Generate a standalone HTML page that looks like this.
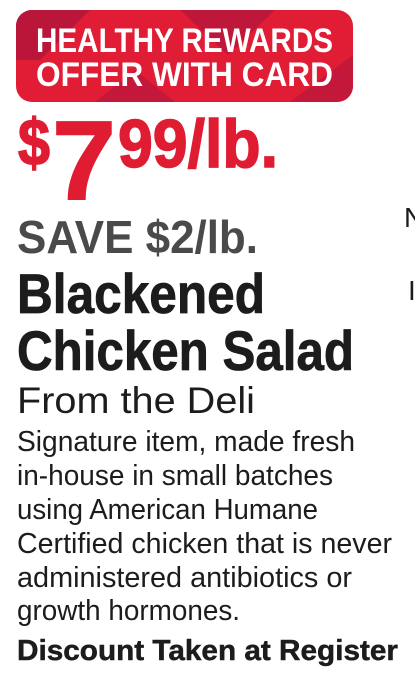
<!DOCTYPE html>
<html><head><meta charset="utf-8"><style>
html,body{margin:0;padding:0;background:#fff;width:415px;height:682px;overflow:hidden}
svg{display:block}
text{font-family:"Liberation Sans",sans-serif}
</style></head><body>
<svg width="415" height="682" viewBox="0 0 415 682" xmlns="http://www.w3.org/2000/svg">
<defs><clipPath id="c"><rect x="16" y="10" width="337" height="92" rx="16"/></clipPath></defs>
<g clip-path="url(#c)">
<rect x="16" y="10" width="337" height="92" fill="#e11c35"/>
<polygon points="16,10 90,10 40,60 16,60" fill="#b9163a"/>
<polygon points="180,10 275,10 228,55" fill="#bf173a"/>
<polygon points="95,102 135,70 175,102" fill="#c4183a"/>
<polygon points="290,102 353,55 353,102" fill="#c4183a"/>
</g>
<g fill="#fff" font-weight="bold" font-size="34">
<text x="36" y="52" textLength="297" lengthAdjust="spacingAndGlyphs">HEALTHY REWARDS</text>
<text x="36" y="86" textLength="297" lengthAdjust="spacingAndGlyphs">OFFER WITH CARD</text>
</g>
<g fill="#e01c33" stroke="#e01c33" stroke-width="1.5" font-weight="bold">
<text x="18" y="165" font-size="66" textLength="32" lengthAdjust="spacingAndGlyphs">$</text>
<text x="52" y="199" font-size="112" textLength="64" lengthAdjust="spacingAndGlyphs">7</text>
<text x="118" y="167" font-size="68" textLength="160" lengthAdjust="spacingAndGlyphs">99/lb.</text>
</g>
<text x="17" y="253" font-size="46" font-weight="bold" fill="#4a4a4a" textLength="241" lengthAdjust="spacingAndGlyphs">SAVE $2/lb.</text>
<g fill="#1c1c1c" stroke="#1c1c1c" stroke-width="0.8" font-weight="bold" font-size="56">
<text x="17" y="313" textLength="248" lengthAdjust="spacingAndGlyphs">Blackened</text>
<text x="17" y="370" textLength="337" lengthAdjust="spacingAndGlyphs">Chicken Salad</text>
</g>
<text x="17" y="413" font-size="37" fill="#1c1c1c" textLength="238" lengthAdjust="spacingAndGlyphs">From the Deli</text>
<g fill="#1c1c1c" font-size="29">
<text x="17" y="451" textLength="338" lengthAdjust="spacingAndGlyphs">Signature item, made fresh</text>
<text x="17" y="485" textLength="316" lengthAdjust="spacingAndGlyphs">in-house in small batches</text>
<text x="17" y="519" textLength="301" lengthAdjust="spacingAndGlyphs">using American Humane</text>
<text x="17" y="553" textLength="375" lengthAdjust="spacingAndGlyphs">Certified chicken that is never</text>
<text x="17" y="587" textLength="335" lengthAdjust="spacingAndGlyphs">administered antibiotics or</text>
<text x="17" y="620" textLength="223" lengthAdjust="spacingAndGlyphs">growth hormones.</text>
</g>
<text x="17" y="660" font-size="29" font-weight="bold" fill="#1c1c1c" stroke="#1c1c1c" stroke-width="0.5" textLength="381" lengthAdjust="spacingAndGlyphs">Discount Taken at Register</text>
<text x="404" y="227" font-size="28" fill="#1c1c1c">N</text>
<text x="408" y="300" font-size="28" fill="#1c1c1c">I</text>
</svg>
</body></html>
